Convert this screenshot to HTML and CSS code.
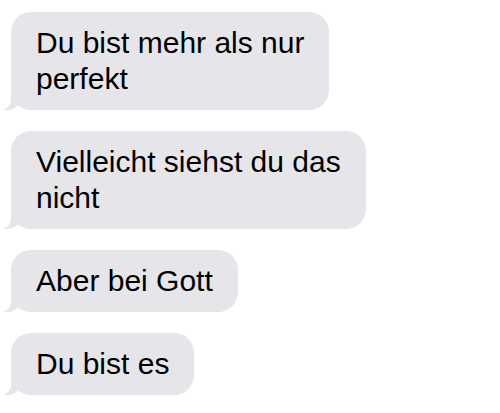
FILE: index.html
```html
<!DOCTYPE html>
<html lang="de">
<head>
  <meta charset="UTF-8">
  <meta name="viewport" content="width=device-width, initial-scale=1.0">
  <title>Nachrichten</title>
  <link rel="stylesheet" href="styles.css">
</head>
<body>

  <div class="chat">
    <div class="bubble">Du bist mehr als nur<br>perfekt</div>
    <div class="bubble">Vielleicht siehst du das<br>nicht</div>
    <div class="bubble">Aber bei Gott</div>
    <div class="bubble">Du bist es</div>
  </div>

</body>
</html>
```

FILE: styles.css
```css
/* Grundlayout */
body {
  margin: 0;
  background-color: #fff;
  font-family: "Liberation Sans", Arial, sans-serif;
  color: #000;
}

.chat {
  display: flex;
  flex-direction: column;
  align-items: flex-start;
  gap: 21px;
  padding: 12px 0 0 11px;
}

/* Sprechblase (empfangen) */
.bubble {
  position: relative;
  background-color: #e5e5ea;
  border-radius: 20px;
  padding: 13px 25px;
  font-size: 30px;
  line-height: 36px;
}

/* Schwanz unten links */
.bubble::before {
  content: "";
  position: absolute;
  z-index: 0;
  bottom: 0;
  left: -8px;
  width: 20px;
  height: 20px;
  background-color: #e5e5ea;
  border-bottom-right-radius: 16px;
}

.bubble::after {
  content: "";
  position: absolute;
  z-index: 1;
  bottom: 0;
  left: -10px;
  width: 10px;
  height: 20px;
  background-color: #fff;
  border-bottom-right-radius: 10px;
}
```
